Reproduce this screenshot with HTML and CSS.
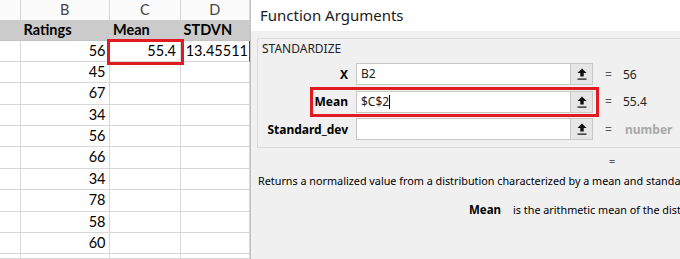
FILE: index.html
```html
<!DOCTYPE html>
<html lang="en">
<head>
  <meta charset="UTF-8" />
  <title>Function Arguments</title>
  <link rel="stylesheet" href="styles.css">
</head>
<body>
  <div class="sheet">
    <div class="col-head"></div>
    <div class="col-head">B</div>
    <div class="col-head">C</div>
    <div class="col-head">D</div>

    <div class="cell head"></div>
    <div class="cell head">Ratings</div>
    <div class="cell head">Mean</div>
    <div class="cell head">STDVN</div>

    <div class="cell"></div>
    <div class="cell num">56</div>
    <div class="cell num mean-cell">55.4</div>
    <div class="cell num active">13.45511</div>
  </div>

  <div class="dialog">
    <div class="titlebar">Function Arguments</div>
    <div class="dlg-body">
      <div class="group">
        <div class="group-title">STANDARDIZE</div>
        <div class="args">
          <div class="arg">
            <label>X</label>
            <div class="field">B2</div>
            <div class="pick"><svg width="10" height="12" viewBox="0 0 10 12"><polygon points="0.5,5 5,0.5 9.5,5"/><rect x="3.3" y="4.5" width="3.4" height="4"/><rect x="0.5" y="10.5" width="9" height="1.2"/></svg></div>
            <span class="eq">=</span>
            <span class="val">56</span>
          </div>
          <div class="arg marked">
            <label>Mean</label>
            <div class="field">$C$2<span class="caret"></span></div>
            <div class="pick"><svg width="10" height="12" viewBox="0 0 10 12"><polygon points="0.5,5 5,0.5 9.5,5"/><rect x="3.3" y="4.5" width="3.4" height="4"/><rect x="0.5" y="10.5" width="9" height="1.2"/></svg></div>
            <span class="eq">=</span>
            <span class="val">55.4</span>
          </div>
          <div class="arg">
            <label>Standard_dev</label>
            <div class="field"></div>
            <div class="pick"><svg width="10" height="12" viewBox="0 0 10 12"><polygon points="0.5,5 5,0.5 9.5,5"/><rect x="3.3" y="4.5" width="3.4" height="4"/><rect x="0.5" y="10.5" width="9" height="1.2"/></svg></div>
            <span class="eq">=</span>
            <span class="val hint">number</span>
          </div>
        </div>
      </div>
      <div class="result-eq">=</div>
      <div class="desc">Returns a normalized value from a distribution characterized by a mean and standard deviation.</div>
      <div class="arg-help"><b>Mean</b><span>is the arithmetic mean of the distribution.</span></div>
    </div>
  </div>

  <script>
    // fill remaining rows of column B
    const ratings = [45, 67, 34, 56, 66, 34, 78, 58, 60, ''];
    const sheet = document.querySelector('.sheet');
    ratings.forEach(r => {
      ['', r, '', ''].forEach((v, i) => {
        const c = document.createElement('div');
        c.className = i === 1 ? 'cell num' : 'cell';
        c.textContent = v;
        sheet.appendChild(c);
      });
    });
  </script>
</body>
</html>
```

FILE: styles.css
```css
body {
  margin: 0;
  width: 680px;
  height: 259px;
  overflow: hidden;
  display: flex;
  background: #fff;
}

.sheet {
  width: 250px;
  height: 259px;
  flex: none;
  overflow: hidden;
  display: grid;
  grid-template-columns: 20.5px 89.5px 70.5px 69.5px;
  grid-template-rows: 19.5px 21px repeat(10, 21.4px) 1fr;
  font-family: Lato, "Liberation Sans", sans-serif;
  font-size: 14.5px;
  color: #000;
}

.col-head {
  background: #fbfbfb;
  border-right: 1px solid #d6d6d6;
  color: #444;
  text-align: center;
  line-height: 19.5px;
  box-sizing: border-box;
}

.cell {
  border-right: 1px solid #d8d8d8;
  border-bottom: 1px solid #d8d8d8;
  box-sizing: border-box;
  padding: 0 3px;
  line-height: 20.4px;
  white-space: nowrap;
  overflow: hidden;
}

.cell.head {
  background: #cbcbcb;
  font-weight: bold;
  border-right-color: #cbcbcb;
  border-bottom-color: #c4c4c4;
}

.cell.num {
  text-align: right;
  padding-right: 3.5px;
}

.mean-cell {
  position: relative;
  overflow: visible;
}

.mean-cell::after {
  content: '';
  position: absolute;
  left: -3px;
  top: -2px;
  width: 77px;
  height: 26px;
  border: 3px solid #e21a22;
  box-sizing: border-box;
}

.cell.active {
  border-right: 1.5px solid #1f6e43;
  padding-right: 1px;
}

.dialog {
  flex: 1;
  border-left: 1px solid #c2c2c2;
  background: #f0f0f0;
  font-family: "Noto Sans", "Open Sans", sans-serif;
  font-size: 10.8px;
  color: #000;
  white-space: nowrap;
  overflow: hidden;
}

.titlebar {
  height: 31px;
  background: #fff;
  padding-left: 9px;
  line-height: 30px;
  font-size: 15px;
  color: #1a1a1a;
}

.dlg-body {
  padding: 7px 0 0 6px;
}

.group {
  height: 110px;
  border: 1px solid #dadada;
  border-right: none;
  box-sizing: border-box;
}

.group-title {
  padding: 2px 0 0 4px;
  line-height: 16px;
  color: #222;
  font-size: 12px;
}

.args {
  margin-top: 6px;
  display: flex;
  flex-direction: column;
  gap: 5.5px;
}

.arg {
  display: grid;
  grid-template-columns: 98px 214px 23px 30px auto;
  height: 22px;
  align-items: center;
  position: relative;
}

.arg label {
  font-weight: bold;
  font-size: 12px;
  text-align: right;
  padding-right: 8px;
}

.field {
  height: 22px;
  background: #fff;
  border: 1px solid #c8c8c8;
  border-right: none;
  box-sizing: border-box;
  padding-left: 4px;
  line-height: 20px;
  font-size: 12px;
  color: #222;
}

.caret {
  display: inline-block;
  width: 1px;
  height: 14px;
  background: #000;
  vertical-align: -3px;
}

.pick {
  height: 22px;
  background: #e6e6e6;
  border: 1px solid #c8c8c8;
  box-sizing: border-box;
  display: flex;
  align-items: center;
  justify-content: center;
}

.pick svg {
  fill: #111;
}

.eq {
  padding-left: 12px;
  color: #555;
  font-size: 12px;
}

.val {
  font-size: 12px;
  color: #222;
}

.val.hint {
  color: #a8a8a8;
  font-weight: bold;
  padding-left: 2px;
}

.arg.marked::after {
  content: '';
  position: absolute;
  left: 52px;
  top: -3.5px;
  width: 289px;
  height: 30px;
  border: 3px solid #e21a22;
  box-sizing: border-box;
}

.result-eq {
  margin-top: 5px;
  padding-left: 352px;
  line-height: 16px;
  color: #555;
}

.desc {
  margin-top: 4px;
  padding-left: 1px;
  line-height: 16px;
}

.arg-help {
  margin-top: 13px;
  padding-left: 212px;
  line-height: 16px;
}

.arg-help b {
  font-size: 11.5px;
  margin-right: 12px;
}
```
